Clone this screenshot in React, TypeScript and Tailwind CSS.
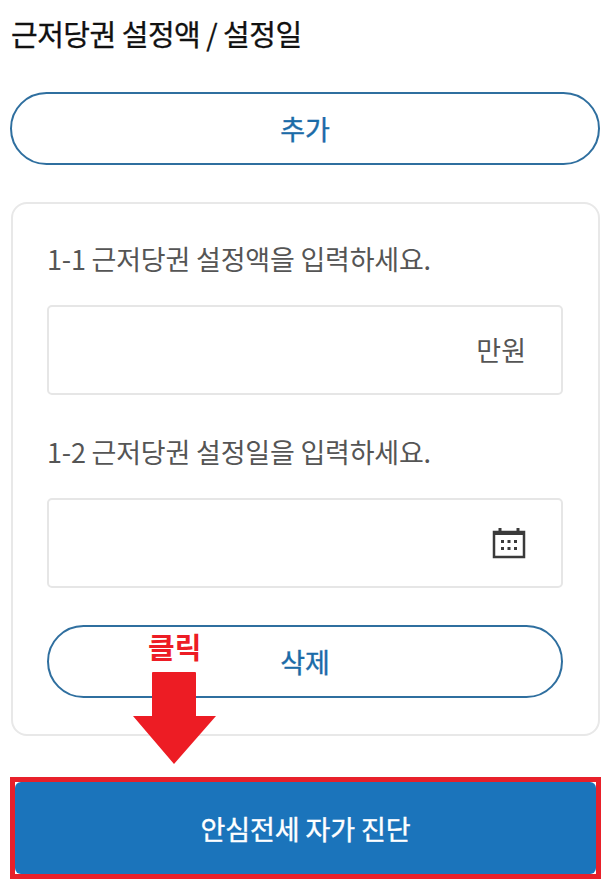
import React from 'react';

const font = "font-['Noto_Sans_CJK_KR','Noto_Sans',sans-serif]";

const CalendarIcon = () => (
  <svg width="34" height="32" viewBox="0 0 34 32" fill="none">
    <rect x="2" y="5" width="30" height="25" stroke="#3a3a3a" strokeWidth="2.5" />
    <rect x="2" y="4" width="30" height="4" fill="#3a3a3a" />
    <rect x="6.5" y="1" width="3" height="6" fill="#3a3a3a" />
    <rect x="24.5" y="1" width="3" height="6" fill="#3a3a3a" />
    <g fill="#3a3a3a">
      <rect x="9" y="13" width="3" height="3" />
      <rect x="15.5" y="13" width="3" height="3" />
      <rect x="22" y="13" width="3" height="3" />
      <rect x="9" y="20" width="3" height="3" />
      <rect x="15.5" y="20" width="3" height="3" />
      <rect x="22" y="20" width="3" height="3" />
    </g>
  </svg>
);

const OutlineButton = ({ label }: { label: string }) => (
  <button className="flex h-[73px] w-full items-center justify-center rounded-[37px] border-2 border-[#2f6f9f] bg-white pt-[2px] text-[27px] font-normal text-[#1b6ba8] [-webkit-text-stroke:0.4px]">
    {label}
  </button>
);

const Field = ({ label, children }: { label: string; children: React.ReactNode }) => (
  <div>
    <p className="h-[38px] text-[27px] leading-[38px] tracking-[-0.2px] text-[#555]">{label}</p>
    <div className="mt-[27px] flex h-[90px] items-center justify-end rounded-[5px] border-2 border-[#e6e6e6] bg-white pr-[35px]">
      {children}
    </div>
  </div>
);

export default function App() {
  return (
    <div className={`relative h-[880px] w-[606px] overflow-hidden bg-white pl-[10px] pr-[6px] ${font}`}>
      <h1 className="pl-px pt-[13px] text-[29px] font-normal leading-[40px] tracking-[-0.5px] text-[#111] [-webkit-text-stroke:0.3px]">
        근저당권 설정액 / 설정일
      </h1>
      <div className="mt-[39px]">
        <OutlineButton label="추가" />
      </div>
      <div className="ml-px mt-[37px] h-[534px] rounded-[16px] border-2 border-[#e8e8e8] bg-white pl-[34px] pr-[35px] pt-[36px]">
        <Field label="1-1 근저당권 설정액을 입력하세요.">
          <span className="text-[27px] text-[#555]">만원</span>
        </Field>
        <div className="mt-[38px]">
          <Field label="1-2 근저당권 설정일을 입력하세요.">
            <CalendarIcon />
          </Field>
        </div>
        <div className="mt-[37px]">
          <OutlineButton label="삭제" />
        </div>
      </div>
      <div className="mt-[41px] h-[102px] w-[591px] border-[5px] border-[#e8202a] bg-white">
        <button className="flex h-full w-full items-center justify-center rounded-[6px] bg-[#1b74bb] pt-[3px] text-[27px] font-normal tracking-[-0.1px] text-white [-webkit-text-stroke:0.4px]">
          안심전세 자가 진단
        </button>
      </div>

      <span className="absolute left-[148px] top-[627px] text-[29px] font-bold leading-[38px] text-[#ed1c24]">클릭</span>
      <svg className="absolute left-[132px] top-[671px]" width="85" height="94" viewBox="0 0 85 94">
        <path d="M21 1 H63 Q64 1 64 2 V45 H84 L42 93 L1 45 H20 V2 Q20 1 21 1 Z" fill="#ed1c24" />
      </svg>
    </div>
  );
}
